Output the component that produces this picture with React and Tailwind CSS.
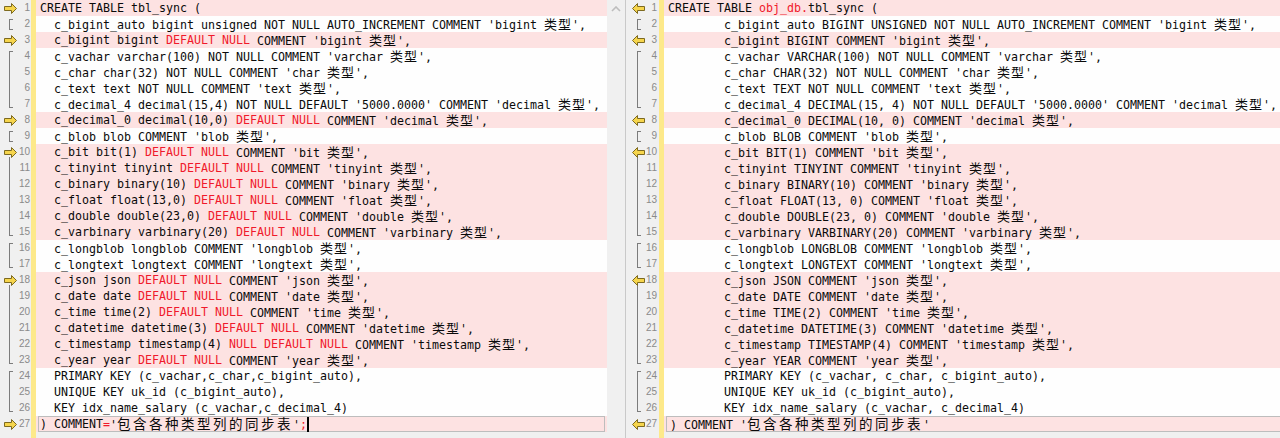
import React from "react";

const leftLines = [
  "CREATE TABLE tbl_sync (",
  "  c_bigint_auto bigint unsigned NOT NULL AUTO_INCREMENT COMMENT 'bigint 类型',",
  "  c_bigint bigint {DEFAULT NULL} COMMENT 'bigint 类型',",
  "  c_vachar varchar(100) NOT NULL COMMENT 'varchar 类型',",
  "  c_char char(32) NOT NULL COMMENT 'char 类型',",
  "  c_text text NOT NULL COMMENT 'text 类型',",
  "  c_decimal_4 decimal(15,4) NOT NULL DEFAULT '5000.0000' COMMENT 'decimal 类型',",
  "  c_decimal_0 decimal(10,0) {DEFAULT NULL} COMMENT 'decimal 类型',",
  "  c_blob blob COMMENT 'blob 类型',",
  "  c_bit bit(1) {DEFAULT NULL} COMMENT 'bit 类型',",
  "  c_tinyint tinyint {DEFAULT NULL} COMMENT 'tinyint 类型',",
  "  c_binary binary(10) {DEFAULT NULL} COMMENT 'binary 类型',",
  "  c_float float(13,0) {DEFAULT NULL} COMMENT 'float 类型',",
  "  c_double double(23,0) {DEFAULT NULL} COMMENT 'double 类型',",
  "  c_varbinary varbinary(20) {DEFAULT NULL} COMMENT 'varbinary 类型',",
  "  c_longblob longblob COMMENT 'longblob 类型',",
  "  c_longtext longtext COMMENT 'longtext 类型',",
  "  c_json json {DEFAULT NULL} COMMENT 'json 类型',",
  "  c_date date {DEFAULT NULL} COMMENT 'date 类型',",
  "  c_time time(2) {DEFAULT NULL} COMMENT 'time 类型',",
  "  c_datetime datetime(3) {DEFAULT NULL} COMMENT 'datetime 类型',",
  "  c_timestamp timestamp(4) {NULL DEFAULT NULL} COMMENT 'timestamp 类型',",
  "  c_year year {DEFAULT NULL} COMMENT 'year 类型',",
  "  PRIMARY KEY (c_vachar,c_char,c_bigint_auto),",
  "  UNIQUE KEY uk_id (c_bigint_auto),",
  "  KEY idx_name_salary (c_vachar,c_decimal_4)",
  ") COMMENT{=}'包含各种类型列的同步表'{;}",
];

const T = "        ";
const rightLines = [
  "CREATE TABLE {obj_db.}tbl_sync (",
  T + "c_bigint_auto BIGINT UNSIGNED NOT NULL AUTO_INCREMENT COMMENT 'bigint 类型',",
  T + "c_bigint BIGINT COMMENT 'bigint 类型',",
  T + "c_vachar VARCHAR(100) NOT NULL COMMENT 'varchar 类型',",
  T + "c_char CHAR(32) NOT NULL COMMENT 'char 类型',",
  T + "c_text TEXT NOT NULL COMMENT 'text 类型',",
  T + "c_decimal_4 DECIMAL(15, 4) NOT NULL DEFAULT '5000.0000' COMMENT 'decimal 类型',",
  T + "c_decimal_0 DECIMAL(10, 0) COMMENT 'decimal 类型',",
  T + "c_blob BLOB COMMENT 'blob 类型',",
  T + "c_bit BIT(1) COMMENT 'bit 类型',",
  T + "c_tinyint TINYINT COMMENT 'tinyint 类型',",
  T + "c_binary BINARY(10) COMMENT 'binary 类型',",
  T + "c_float FLOAT(13, 0) COMMENT 'float 类型',",
  T + "c_double DOUBLE(23, 0) COMMENT 'double 类型',",
  T + "c_varbinary VARBINARY(20) COMMENT 'varbinary 类型',",
  T + "c_longblob LONGBLOB COMMENT 'longblob 类型',",
  T + "c_longtext LONGTEXT COMMENT 'longtext 类型',",
  T + "c_json JSON COMMENT 'json 类型',",
  T + "c_date DATE COMMENT 'date 类型',",
  T + "c_time TIME(2) COMMENT 'time 类型',",
  T + "c_datetime DATETIME(3) COMMENT 'datetime 类型',",
  T + "c_timestamp TIMESTAMP(4) COMMENT 'timestamp 类型',",
  T + "c_year YEAR COMMENT 'year 类型',",
  T + "PRIMARY KEY (c_vachar, c_char, c_bigint_auto),",
  T + "UNIQUE KEY uk_id (c_bigint_auto),",
  T + "KEY idx_name_salary (c_vachar, c_decimal_4)",
  ") COMMENT '包含各种类型列的同步表'",
];

// diff blocks: [start, end, changed]
const blocks = [
  [1, 1, true], [2, 2, false], [3, 3, true], [4, 7, false], [8, 8, true],
  [9, 9, false], [10, 15, true], [16, 17, false], [18, 23, true],
  [24, 26, false], [27, 27, true],
];

const rowInfo = (n) => {
  const [s, e, changed] = blocks.find(([s, e]) => n >= s && n <= e);
  let part = "mid";
  if (s === e) part = "single";
  else if (n === s) part = "top";
  else if (n === e) part = "bottom";
  return { changed, part };
};

const Arrow = ({ left }) => (
  <svg width="13" height="11" viewBox="0 0 13 11" className={left ? "-scale-x-100" : ""}>
    <path
      d="M0.5 3.5 H7.5 V0.5 L12.5 5.5 L7.5 10.5 V7.5 H0.5 Z"
      fill="#f6d54c"
      stroke="#7d6a20"
      strokeWidth="1"
    />
  </svg>
);

const Mark = ({ n, left }) => {
  const { changed, part } = rowInfo(n);
  if (changed && (part === "single" || part === "top")) {
    return (
      <div className="relative h-4">
        {part === "top" && <div className="absolute left-[5px] top-[13px] h-[3px] border-l border-[#7c7c7c]" />}
        <div className="absolute left-0 top-[3px]">
          <Arrow left={left} />
        </div>
      </div>
    );
  }
  if (part === "single") return <div className="ml-[5px] mt-[3px] h-[11px] w-[4px] border-l border-t border-b border-[#7c7c7c]" />;
  if (part === "top") return <div className="ml-[5px] mt-[3px] h-[13px] w-[4px] border-l border-t border-[#7c7c7c]" />;
  if (part === "bottom") return <div className="ml-[5px] h-[12px] w-[4px] border-l border-b border-[#7c7c7c]" />;
  return <div className="ml-[5px] h-4 border-l border-[#7c7c7c]" />;
};

// CJK glyphs take a double cell (14px), the last line is drawn a bit wider
const Cjk = ({ text, wide }) =>
  [...text].map((ch, k) => (
    <span
      key={k}
      className={
        wide
          ? "inline-block w-[16px] text-[13.5px] leading-4 [font-family:'Noto_Sans_CJK_SC',sans-serif]"
          : "inline-block w-[14px] text-[13px] leading-4 [font-family:'Noto_Sans_CJK_SC',sans-serif]"
      }
    >
      {ch}
    </span>
  ));

const CodeText = ({ line, wide }) =>
  line.split(/(\{[^}]*\})/).map((chunk, i) => {
    const red = chunk.startsWith("{");
    const text = red ? chunk.slice(1, -1) : chunk;
    const parts = text.split(/([\u4e00-\u9fff]+)/).map((p, j) =>
      /[\u4e00-\u9fff]/.test(p) ? <Cjk key={j} text={p} wide={wide} /> : p
    );
    return (
      <span key={i} className={red ? "text-[#f0192b]" : ""}>
        {parts}
      </span>
    );
  });

const Pane = ({ lines, left }) => (
  <div className={left ? "flex w-[626px] shrink-0" : "flex flex-1 min-w-0"}>
    {/* gutter */}
    <div className={left ? "w-[31px] shrink-0 bg-[#f0f0f0] pl-[4px]" : "w-[33px] shrink-0 bg-[#f0f0f0] pl-[6px]"}>
      {lines.map((_, i) => (
        <div key={i} className="flex h-4 items-center">
          <div className="w-[14px] h-4 shrink-0">
            <Mark n={i + 1} left={!left} />
          </div>
          <span
            className={
              left
                ? "flex-1 text-right pr-[1px] text-[10px] leading-4 text-[#8a8a8a] [font-family:'Liberation_Sans',sans-serif]"
                : "flex-1 text-right pr-[2px] text-[10px] leading-4 text-[#8a8a8a] [font-family:'Liberation_Sans',sans-serif]"
            }
          >
            {i + 1}
          </span>
        </div>
      ))}
    </div>
    <div className="w-[5px] shrink-0 bg-[#fde98a]" />
    {/* code */}
    <div className="flex-1 min-w-0 overflow-hidden bg-[#f0f0f0] text-[11.63px] leading-4 text-[#0a0a0a] [font-family:'DejaVu_Sans_Mono',monospace]">
      {lines.map((line, i) => {
        const n = i + 1;
        const { changed } = rowInfo(n);
        const bg = changed ? "bg-[#fde2e2]" : "bg-[#fefefe]";
        if (n === 27) {
          return (
            <div key={i} className={`h-4 ${bg} ${left ? "pl-[2px] pr-[2px]" : "pl-[2px]"}`}>
              <div className={left ? "flex h-4 items-center border border-[#bdbdbd] pl-[1px] whitespace-pre" : "flex h-4 items-center border border-r-0 border-[#bdbdbd] pl-[3px] whitespace-pre"}>
                <CodeText line={line} wide />
                {left && <span className="inline-block h-[15px] w-[2px] bg-black" />}
              </div>
            </div>
          );
        }
        return (
          <div key={i} className={`flex h-4 items-center whitespace-pre pl-[4px] ${bg}`}>
            <CodeText line={line} />
          </div>
        );
      })}
    </div>
    {left && (
      <div className="w-[19px] shrink-0 bg-[#f0f0f0] border-r border-[#c9c9c9] pt-[6px] pl-[4px]">
        <svg width="10" height="6" viewBox="0 0 10 6">
          <path d="M1 5 L5 1 L9 5" fill="none" stroke="#bdbdbd" strokeWidth="1.6" />
        </svg>
      </div>
    )}
  </div>
);

export default function App() {
  return (
    <div className="flex h-[438px] w-[1280px] overflow-hidden bg-[#f0f0f0]">
      <Pane lines={leftLines} left />
      <Pane lines={rightLines} />
    </div>
  );
}
